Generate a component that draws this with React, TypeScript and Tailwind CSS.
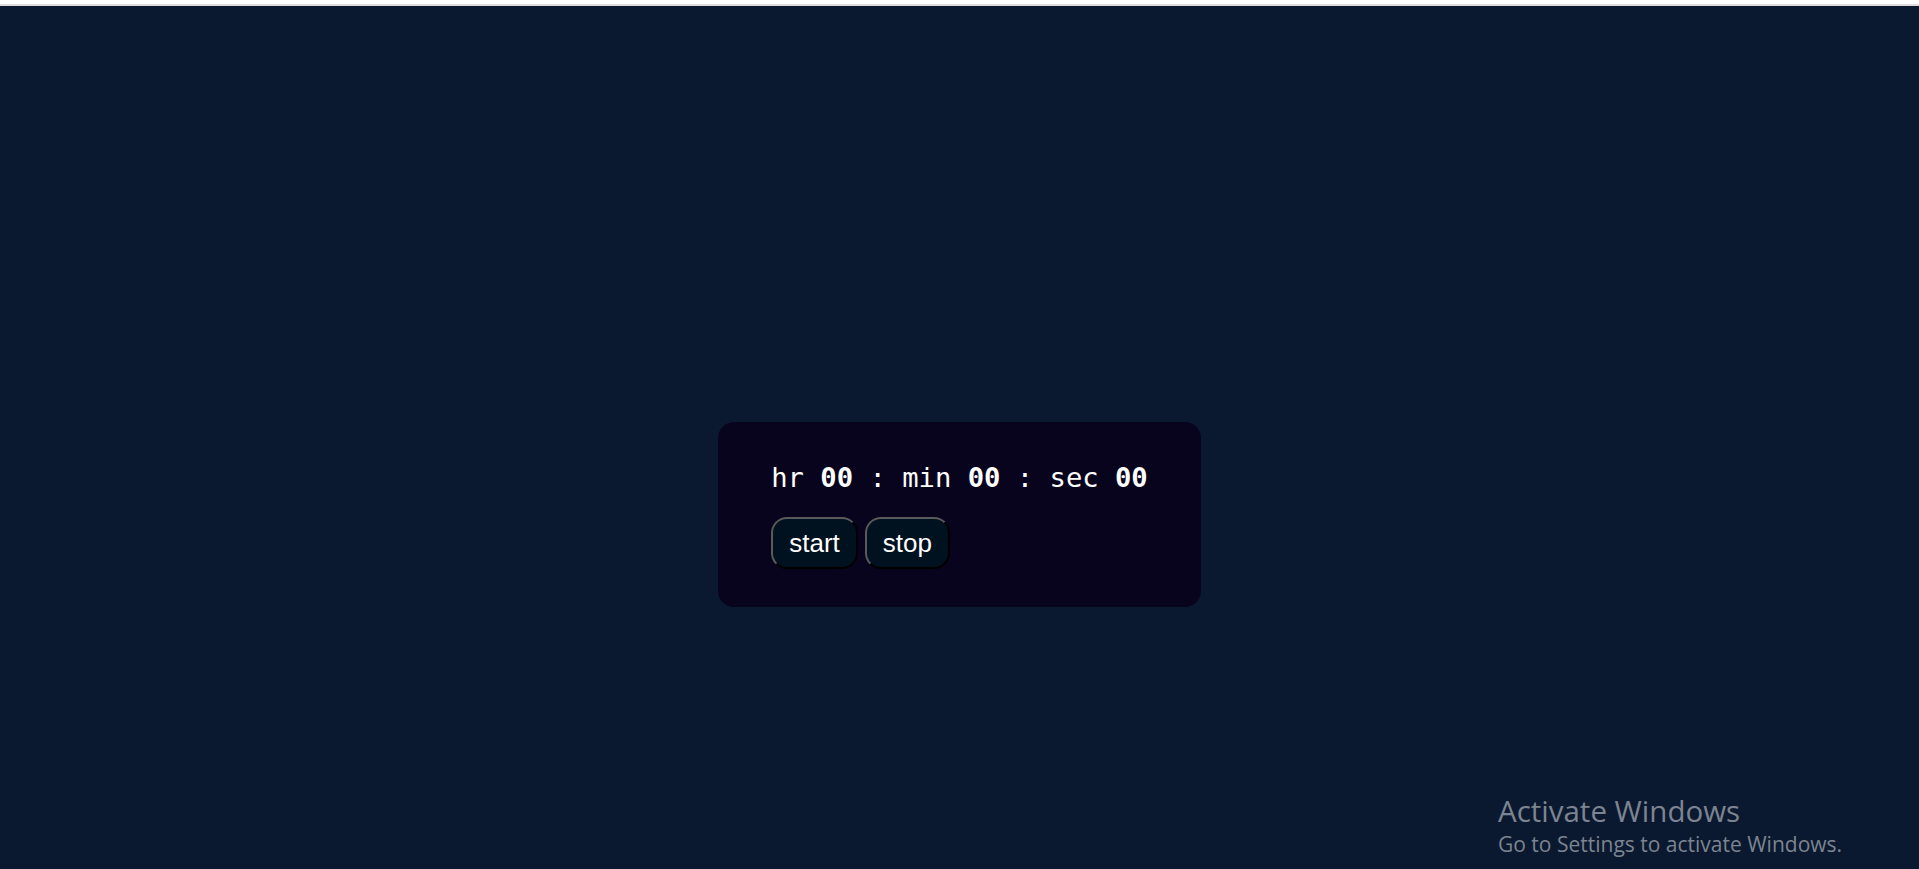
import React from "react";

export default function App() {
  return (
    <div className="relative w-[1919px] h-[869px] overflow-hidden bg-[#0b1930]">
      <div className="h-[4px] bg-white" />
      <div className="h-[2px] bg-[#dcdcdc]" />
      <div className="flex justify-center pt-[416px]">
        <div className="bg-[#08041e] rounded-[16px] px-[53px] pt-[38px] pb-[38px]">
          <div
            className="text-white text-[27.2px] leading-[36px] whitespace-pre"
            style={{ fontFamily: '"DejaVu Sans Mono", monospace' }}
          >
            hr <b>00</b> : min <b>00</b> : sec <b>00</b>
          </div>
          <div className="flex gap-[7px] mt-[21px]" style={{ fontFamily: '"Liberation Sans", Arial, sans-serif' }}>
            <button className="bg-[#00111f] text-white text-[26px] leading-[30px] px-[16px] py-[9px] rounded-[16px] border-[2.5px] border-t-[#5a5a5a] border-l-[#5a5a5a] border-r-black border-b-black">
              start
            </button>
            <button className="bg-[#00111f] text-white text-[26px] leading-[30px] px-[16px] py-[9px] rounded-[16px] border-[2.5px] border-t-[#5a5a5a] border-l-[#5a5a5a] border-r-black border-b-black">
              stop
            </button>
          </div>
        </div>
      </div>
      <div
        className="absolute left-[1498px] top-[792px] text-[#7c8491]"
        style={{ fontFamily: '"Open Sans", "Noto Sans", sans-serif' }}
      >
        <div className="text-[29.5px] leading-[38px]">Activate Windows</div>
        <div className="text-[21px] leading-[28px]">Go to Settings to activate Windows.</div>
      </div>
    </div>
  );
}
